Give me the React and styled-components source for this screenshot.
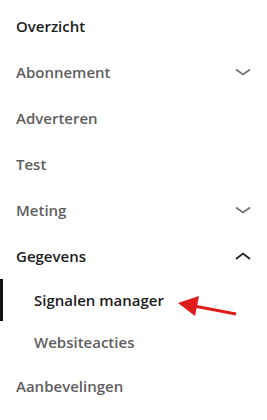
import styled, { createGlobalStyle } from 'styled-components';

const GlobalStyle = createGlobalStyle`
    html, body {
        margin: 0;
        padding: 0;
        background: #FFF;
    }
    body {
        font-family: "Open Sans", "Noto Sans", sans-serif;
    }
`;

const Sidebar = styled.nav`
    position: relative;
    width: 267px;
    height: 420px;
    padding-top: 3px;
    box-sizing: border-box;
    background: #FFF;
    overflow: hidden;
`;

const Menu = styled.ul`
    list-style: none;
    margin: 0;
    padding: 0;
`;

const Item = styled.li`
    position: relative;
    display: flex;
    align-items: center;
    justify-content: space-between;
    height: ${props => props.$sub ? '42px' : '46px'};
    padding: 0 16px 0 ${props => props.$sub ? '34px' : '16px'};
    font-size: 15px;
    font-weight: 600;
    color: ${props => props.$dark ? '#1c1c1c' : '#5e5e5e'};

    ${props => props.$active && `
        &::before {
            content: '';
            position: absolute;
            left: 0;
            top: 0;
            bottom: 0;
            width: 3px;
            background: #111;
        }
    `}
`;

const Chevron = styled.svg`
    width: 16px;
    height: 8px;
    flex-shrink: 0;
`;

const Annotation = styled.svg`
    position: absolute;
    left: 172px;
    top: 292px;
    width: 70px;
    height: 28px;
`;

function Caret({ up, color }) {
    return (
        <Chevron viewBox="0 0 16 8">
            <polyline
                points={up ? '1,7 8,1.5 15,7' : '1,1.5 8,6.5 15,1.5'}
                fill="none"
                stroke={color}
                strokeWidth="1.7"
            />
        </Chevron>
    );
}

const items = [
    { label: 'Overzicht', dark: true },
    { label: 'Abonnement', caret: 'down' },
    { label: 'Adverteren' },
    { label: 'Test' },
    { label: 'Meting', caret: 'down' },
    { label: 'Gegevens', dark: true, caret: 'up' },
    { label: 'Signalen manager', dark: true, sub: true, active: true },
    { label: 'Websiteacties', sub: true },
    { label: 'Aanbevelingen' },
];

function App() {
    return (
        <>
            <GlobalStyle />
            <Sidebar>
                <Menu>
                    {items.map(item => (
                        <Item
                            key={item.label}
                            $dark={item.dark}
                            $sub={item.sub}
                            $active={item.active}>
                            <span>{item.label}</span>
                            {item.caret &&
                                <Caret
                                    up={item.caret === 'up'}
                                    color={item.caret === 'up' ? '#1c1c1c' : '#707070'} />}
                        </Item>
                    ))}
                </Menu>
                <Annotation viewBox="0 0 70 28">
                    <line x1="22" y1="14" x2="64" y2="22" stroke="#e01b1b" strokeWidth="3" />
                    <polygon points="6,11 27,4 23,24" fill="#e01b1b" />
                </Annotation>
            </Sidebar>
        </>
    );
}

export default App;
